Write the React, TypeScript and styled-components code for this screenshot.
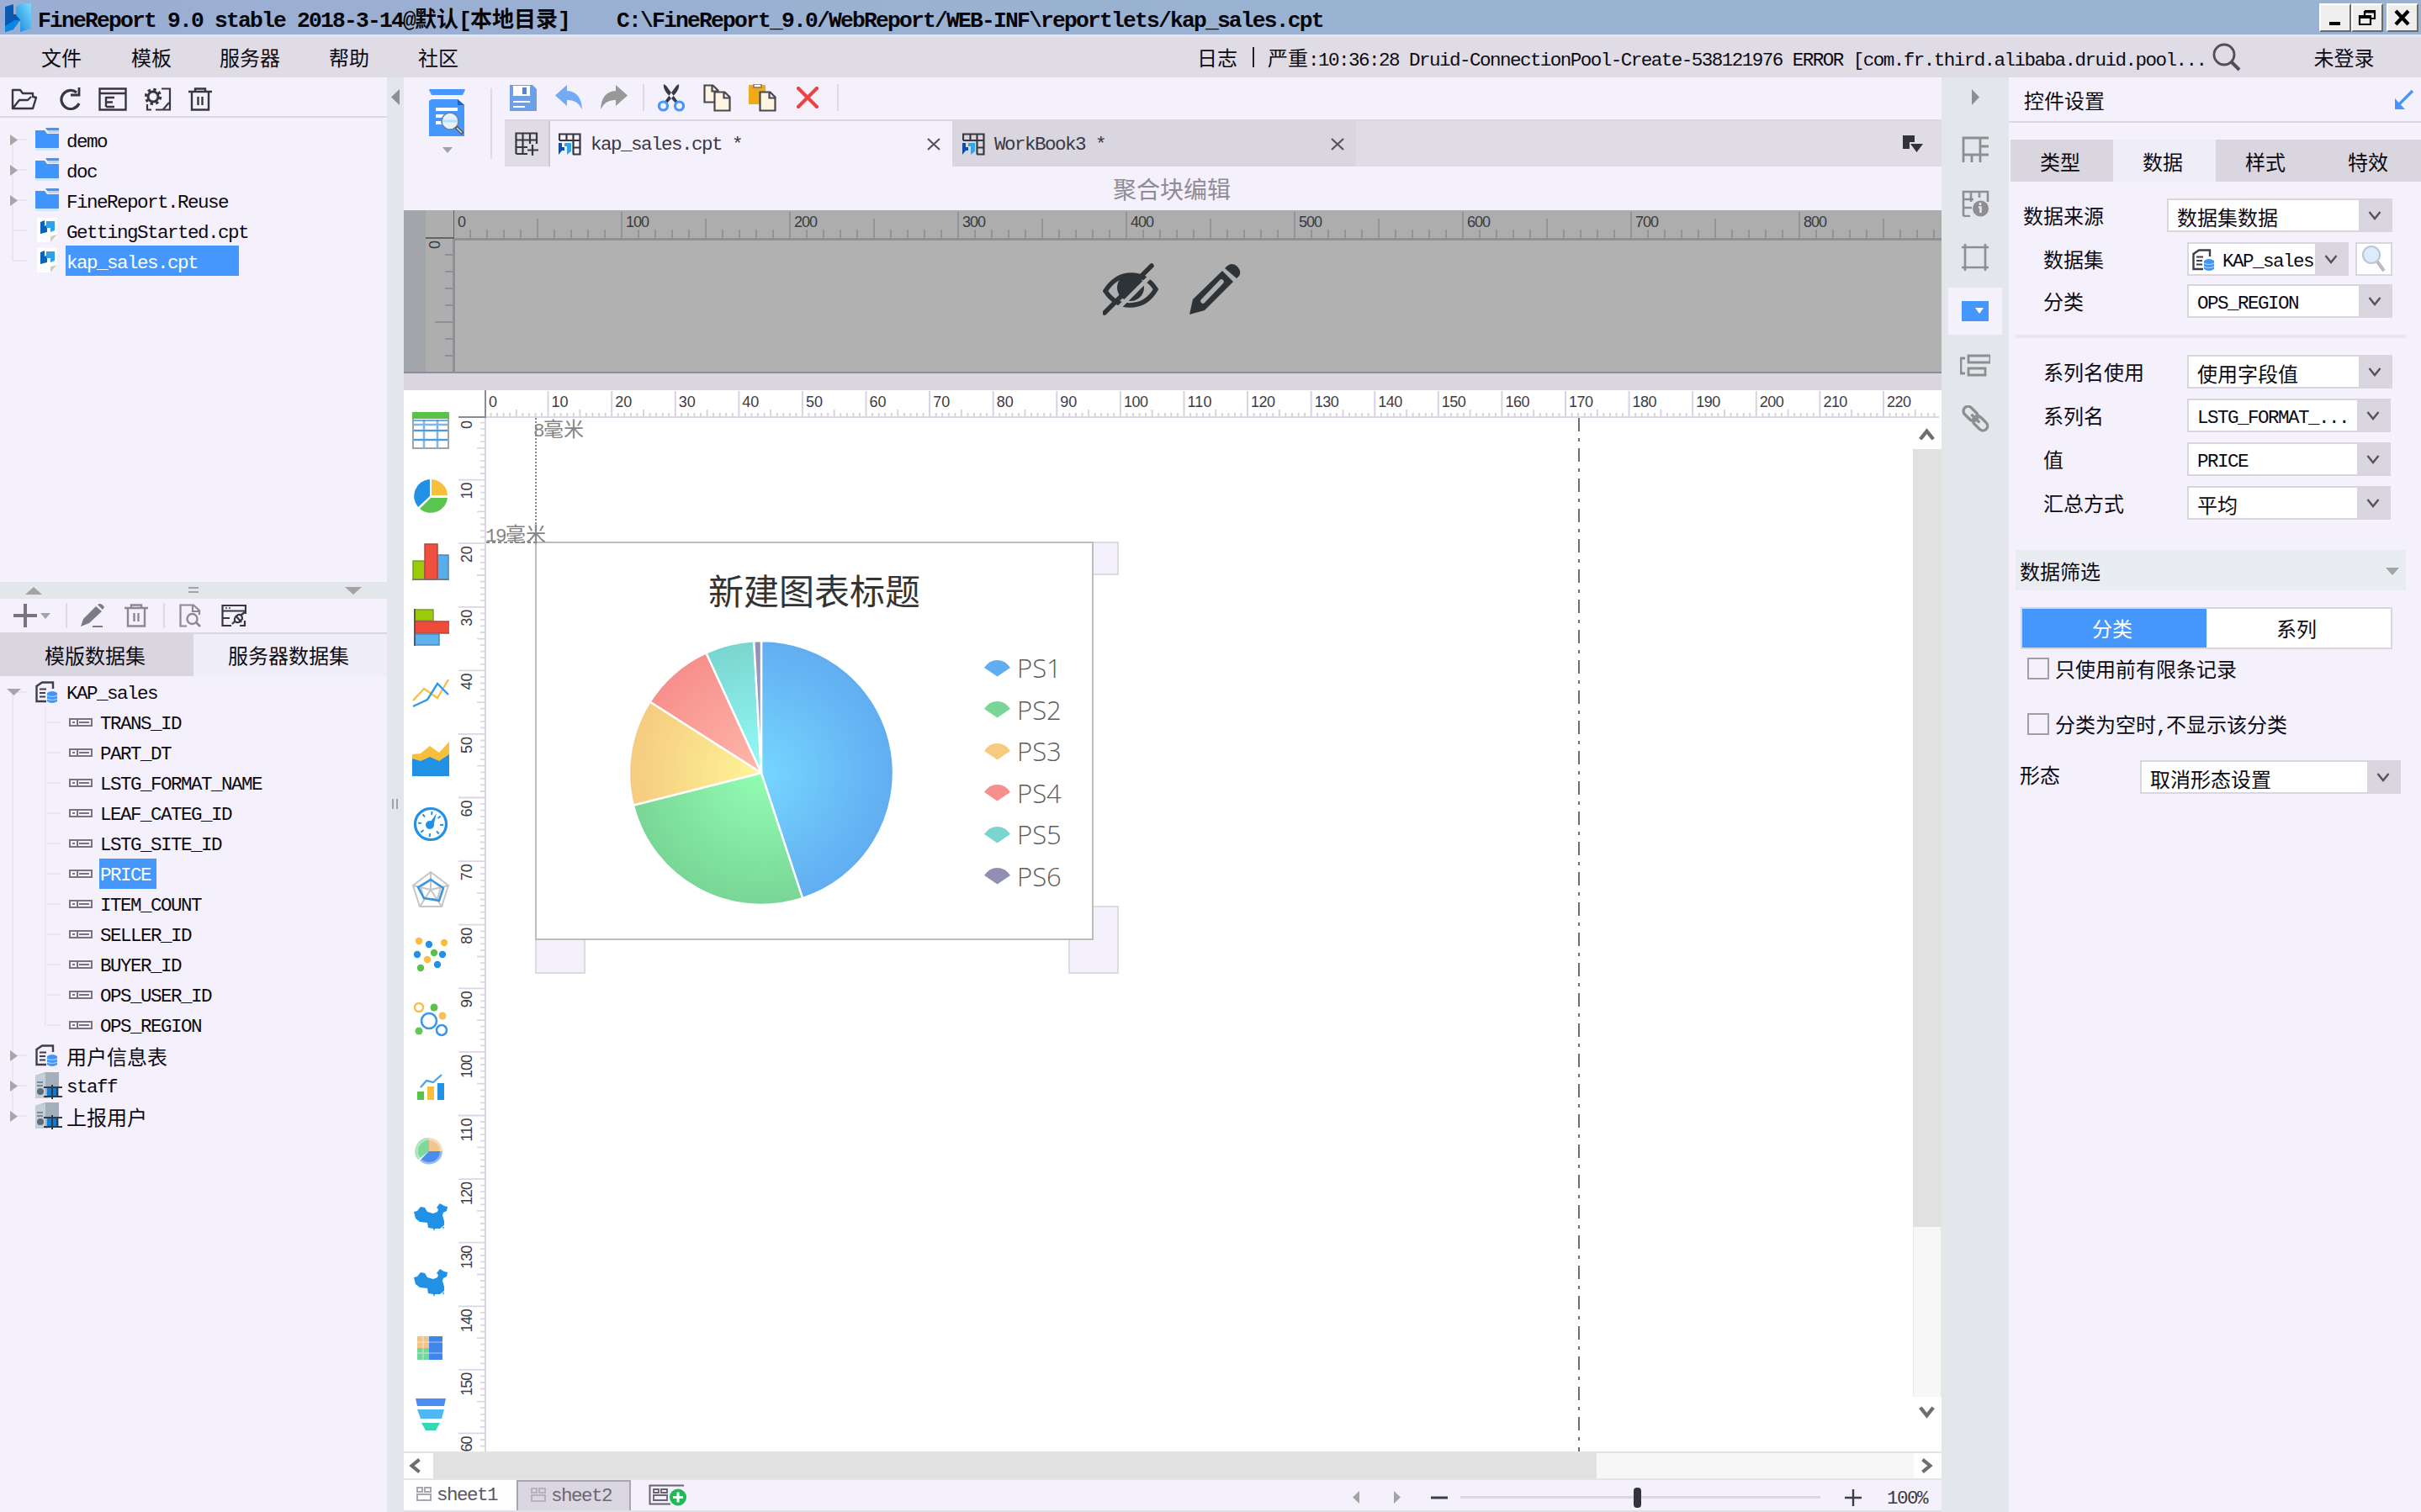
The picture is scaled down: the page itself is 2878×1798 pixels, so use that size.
import React from "react";
import styled, { createGlobalStyle, css } from "styled-components";

const Global = createGlobalStyle`
  *, *::before, *::after { box-sizing: border-box; }
  html, body { margin: 0; padding: 0; background: #f4f1fd; }
  body { overflow: hidden; }
  svg { display: block; flex: none; }
`;

const cjk = `"Noto Sans CJK SC", sans-serif`;
const mono = `"Liberation Mono", "Noto Sans CJK SC", monospace`;
const c = {
  bg: "#f4f1fd",
  bar: "#dfdce6",
  tab: "#d9d6e0",
  split: "#e3e7eb",
  blue: "#4597fd",
  ink: "#0c0a12",
  icon: "#38363f",
};

/* ---------- text ---------- */

const Line = styled.span<{ $h: number; $lh: number; $color: string; $bold?: boolean }>`
  display: block;
  flex: none;
  white-space: pre;
  height: ${(p) => p.$h}px;
  line-height: ${(p) => p.$lh}px;
  color: ${(p) => p.$color};
  font-family: ${mono};
  font-weight: ${(p) => (p.$bold ? 700 : 400)};
  font-size: 0;
`;
const Wide = styled.span<{ $size: number }>`
  font-family: ${cjk};
  font-size: ${(p) => p.$size}px;
`;
const Narrow = styled.span<{ $u: number; $size: number }>`
  font-family: ${mono};
  font-size: ${(p) => p.$size}px;
  letter-spacing: ${(p) => p.$u - p.$size * 0.6}px;
`;

type TextProps = { children: string; u?: number; wide?: number; h?: number; color?: string; bold?: boolean };
function Text({ children, u = 12, wide, h = 30, color = c.ink, bold }: TextProps) {
  const runs = children.match(/[\x00-\xff]+|[^\x00-\xff]+/g) || [];
  const latin = runs.length === 1 && runs[0].charCodeAt(0) < 256;
  return (
    <Line $h={h} $lh={latin ? h + 3 : h} $color={color} $bold={bold}>
      {runs.map((r, i) =>
        r.charCodeAt(0) < 256 ? (
          <Narrow key={i} $u={u} $size={u * 1.88}>{r}</Narrow>
        ) : (
          <Wide key={i} $size={wide ?? u * 2}>{r}</Wide>
        )
      )}
    </Line>
  );
}

/* ---------- frame ---------- */

const Screen = styled.div`
  width: 2878px;
  height: 1798px;
  display: flex;
  flex-direction: column;
  overflow: hidden;
  background: ${c.bg};
`;
const TitleBar = styled.header`
  height: 44px;
  flex: none;
  display: flex;
  align-items: center;
  background: linear-gradient(90deg, #9aaed3, #9ab3d2 55%, #9ab3d2);
  border-bottom: 3px solid #e3e6f0;
  padding: 0 3px 0 5px;
  gap: 8px;
`;
const WindowButtons = styled.div`
  margin-left: auto;
  display: flex;
`;
const WinButton = styled.div<{ $gap?: number }>`
  width: 38px;
  height: 34px;
  margin-left: ${(p) => p.$gap || 0}px;
  background: #eeeeec;
  border: 2px solid;
  border-color: #fff #6b6b6b #6b6b6b #fff;
  display: flex;
  align-items: center;
  justify-content: center;
`;
const MenuBar = styled.nav`
  height: 48px;
  flex: none;
  display: flex;
  align-items: center;
  background: ${c.bar};
`;
const Gap = styled.div<{ $w: number }>`
  width: ${(p) => p.$w}px;
  flex: none;
`;
const Divider = styled.div<{ $h: number; $color?: string }>`
  width: 2px;
  height: ${(p) => p.$h}px;
  background: ${(p) => p.$color || "#dddae6"};
  flex: none;
`;
const Body = styled.div`
  flex: 1;
  display: flex;
  min-height: 0;
`;

/* ---------- left side ---------- */

const Side = styled.aside`
  width: 460px;
  flex: none;
  display: flex;
  flex-direction: column;
`;
const FileTools = styled.div`
  height: 48px;
  flex: none;
  display: flex;
  align-items: center;
  border-bottom: 2px solid ${c.tab};
  padding: 6px 0 0 13px;
`;
const FileTree = styled.div`
  height: 552px;
  flex: none;
  padding-top: 8px;
`;
const HSplit = styled.div`
  height: 20px;
  flex: none;
  background: ${c.split};
  display: flex;
  align-items: center;
  justify-content: space-between;
  padding: 0 30px;
`;
const DataTools = styled.div`
  height: 42px;
  flex: none;
  display: flex;
  align-items: center;
  border-bottom: 2px solid ${c.tab};
  padding-left: 16px;
`;
const DataTabs = styled.div`
  height: 50px;
  flex: none;
  display: flex;
`;
const DataTab = styled.div<{ $on?: boolean }>`
  flex: 1;
  display: flex;
  align-items: center;
  justify-content: center;
  padding-right: 4px;
  background: ${(p) => (p.$on ? c.tab : "#efedf7")};
`;
const DataTree = styled.div`
  padding-top: 1px;
`;
const TreeRow = styled.div`
  height: 36px;
  display: flex;
  align-items: center;
`;
const TreeIcon = styled.div<{ $w: number }>`
  width: ${(p) => p.$w}px;
  flex: none;
  display: flex;
  align-items: center;
`;
const TreeLabel = styled.div<{ $sel?: boolean; $w?: number; $top?: number }>`
  height: 36px;
  padding: ${(p) => p.$top ?? 4}px 0 0 1px;
  ${(p) => p.$sel && css`background: ${c.blue};`}
  ${(p) => p.$w && css`width: ${p.$w}px;`}
`;
const VSplit = styled.div`
  width: 20px;
  flex: none;
  background: ${c.split};
  display: flex;
  flex-direction: column;
  align-items: center;
  padding-top: 14px;
  gap: 825px;
`;

/* ---------- centre ---------- */

const Center = styled.main`
  width: 1828px;
  flex: none;
  display: flex;
  flex-direction: column;
`;
const TopTools = styled.div`
  height: 106px;
  flex: none;
  display: flex;
`;
const Preview = styled.div`
  width: 120px;
  display: flex;
  padding: 13px 0 0 30px;
`;
const PreviewIcon = styled.div`
  width: 73px;
  display: flex;
  flex-direction: column;
  gap: 13px;
`;
const TopRight = styled.div`
  flex: 1;
  display: flex;
  flex-direction: column;
`;
const EditTools = styled.div`
  height: 50px;
  flex: none;
  display: flex;
  align-items: center;
  padding: 0 0 2px 6px;
`;
const BookTabs = styled.div`
  height: 56px;
  display: flex;
  background: ${c.bar};
  border-top: 2px solid ${c.tab};
`;
const NewBook = styled.div`
  width: 54px;
  display: flex;
  align-items: center;
  padding-left: 12px;
  border-right: 2px solid #cbc8d2;
`;
const BookTab = styled.div<{ $on?: boolean; $w: number }>`
  width: ${(p) => p.$w}px;
  display: flex;
  align-items: center;
  padding: 0 14px 0 ${(p) => (p.$on ? 10 : 12)}px;
  gap: 11px;
  background: ${(p) => (p.$on ? c.bg : c.tab)};
`;
const Push = styled.div`
  margin-left: auto;
`;
const TabMenuSlot = styled.div`
  width: 46px;
  margin-left: auto;
  display: flex;
  align-items: center;
`;
const BlockTitle = styled.div`
  height: 52px;
  flex: none;
  display: flex;
  justify-content: center;
  align-items: center;
  padding-right: 2px;
`;
const BlockArea = styled.section`
  height: 194px;
  flex: none;
  display: flex;
  background: #b1b1b1;
  border-bottom: 2px solid #8f8f98;
`;
const BlockGutter = styled.div`
  width: 60px;
  background: linear-gradient(90deg, #a2a6ab 0 26px, #aeaeae 26px);
`;
const BlockMain = styled.div`
  flex: 1;
  display: flex;
  flex-direction: column;
`;
const BlockActions = styled.div`
  display: flex;
  padding: 26px 0 0 771px;
  gap: 36px;
`;
const Band = styled.div`
  height: 20px;
  flex: none;
  background: ${c.tab};
`;
const Design = styled.section`
  height: 1262px;
  flex: none;
  display: flex;
  background: #fff;
`;
const Palette = styled.div`
  width: 65px;
  flex: none;
  display: flex;
  flex-direction: column;
  align-items: flex-start;
  padding: 9px 0 0 10px;
`;
const PaletteItem = styled.div`
  height: 77.95px;
  flex: none;
  display: flex;
  align-items: center;
`;
const Sheet = styled.div`
  flex: 1;
  display: flex;
  flex-direction: column;
  min-width: 0;
`;
const SheetBody = styled.div`
  height: 1229px;
  display: flex;
`;
const Canvas = styled.div`
  position: relative;
  width: 1696px;
  flex: none;
`;
const Handle = styled.div<{ $x: number; $y: number; $w: number; $h: number }>`
  position: absolute;
  left: ${(p) => p.$x}px;
  top: ${(p) => p.$y}px;
  width: ${(p) => p.$w}px;
  height: ${(p) => p.$h}px;
  background: ${c.bg};
  border: 2px solid #dddae4;
`;
const Pin = styled.div<{ $x: number; $y: number }>`
  position: absolute;
  left: ${(p) => p.$x}px;
  top: ${(p) => p.$y}px;
`;
const Chart = styled.div`
  position: absolute;
  left: 58px;
  top: 147px;
  width: 664px;
  height: 474px;
  background: #fff;
  border: 2px solid #bcbcbc;
  display: flex;
  flex-direction: column;
`;
const ChartTitle = styled.div`
  margin-top: 25px;
  height: 60px;
  line-height: 60px;
  text-align: center;
  font-family: ${cjk};
  font-size: 42px;
  color: #333;
`;
const ChartBody = styled.div`
  display: flex;
  margin-top: 30px;
  padding-left: 109px;
`;
const Legend = styled.div`
  margin: 9px 0 0 107px;
`;
const LegendRow = styled.div`
  height: 49.5px;
  display: flex;
  align-items: center;
  gap: 8px;
  font-family: "Open Sans", sans-serif;
  font-weight: 300;
  font-size: 31px;
  line-height: 49px;
  color: #5c5c5c;
`;
const VScroll = styled.div`
  width: 34px;
  display: flex;
  flex-direction: column;
  padding-top: 3px;
`;
const HScroll = styled.div`
  height: 34px;
  flex: none;
  display: flex;
  border-top: 2px solid #e6e3e0;
  border-bottom: 2px solid #e9e3e0;
`;
const ScrollButton = styled.div<{ $w: number; $h?: number; $shift?: number }>`
  width: ${(p) => p.$w}px;
  ${(p) => p.$h && css`height: ${p.$h}px;`}
  display: flex;
  align-items: center;
  justify-content: center;
  padding-right: ${(p) => p.$shift ?? 2}px;
  background: #fefefe;
`;
const Thumb = styled.div<{ $len: number; $v?: boolean }>`
  background: #e1e1e1;
  ${(p) => (p.$v ? css`height: ${p.$len}px;` : css`width: ${p.$len}px;`)}
`;
const Track = styled.div<{ $len: number; $v?: boolean }>`
  background: #f7f7f7;
  ${(p) => (p.$v ? css`height: ${p.$len}px; border: 0 solid #ebe7e3; border-width: 0 1px;` : css`width: ${p.$len}px;`)}
`;
const Status = styled.footer`
  height: 38px;
  flex: none;
  display: flex;
  align-items: center;
  border-bottom: 2px solid #e0dfe6;
`;
const SheetTab = styled.div<{ $on?: boolean }>`
  width: ${(p) => (p.$on ? 134 : 136)}px;
  height: 36px;
  display: flex;
  align-items: center;
  padding: 0 0 3px 15px;
  gap: 6px;
  background: ${(p) => (p.$on ? "#fefdff" : "#dad7e2")};
  ${(p) => !p.$on && css`border: 2px solid #a9a6b2; border-bottom: 0;`}
`;
const Zoom = styled.div`
  margin-left: 791px;
  padding-top: 5px;
  display: flex;
  align-items: center;
`;
const Slider = styled.div`
  width: 428px;
  height: 24px;
  display: flex;
  align-items: center;
  background: linear-gradient(#dad7e4, #dad7e4) center / 100% 3px no-repeat;
`;
const Knob = styled.div`
  width: 9px;
  height: 24px;
  margin-left: 206px;
  border-radius: 4px;
  background: #35343d;
`;

/* ---------- right side ---------- */

const Strip = styled.div`
  width: 80px;
  flex: none;
  background: ${c.split};
  display: flex;
  flex-direction: column;
  align-items: center;
  padding-top: 14px;
`;
const StripItem = styled.div<{ $on?: boolean; $first?: boolean }>`
  width: 64px;
  height: 56px;
  margin-top: ${(p) => (p.$first ? 25 : 8)}px;
  flex: none;
  display: flex;
  align-items: center;
  justify-content: center;
  ${(p) => p.$on && css`background: ${c.bg};`}
`;
const Props = styled.aside`
  flex: 1;
  display: flex;
  flex-direction: column;
`;
const PropsTitle = styled.div`
  height: 54px;
  flex: none;
  display: flex;
  align-items: center;
  justify-content: space-between;
  padding: 1px 8px 0 18px;
  border-bottom: 2px solid ${c.tab};
`;
const PropsTabs = styled.div`
  height: 50px;
  flex: none;
  margin: 20px 0 0 2px;
  display: flex;
`;
const PropsTab = styled.div<{ $on?: boolean }>`
  flex: 1;
  display: flex;
  align-items: center;
  justify-content: center;
  padding: 1px 4px 0 0;
  background: ${(p) => (p.$on ? "#efedf7" : c.tab)};
`;
const Field = styled.div<{ $top: number; $indent: number; $end?: number }>`
  height: 40px;
  flex: none;
  display: flex;
  align-items: center;
  justify-content: space-between;
  margin-top: ${(p) => p.$top}px;
  padding: 0 ${(p) => p.$end ?? 34}px 0 ${(p) => p.$indent}px;
`;
const Raised = styled.div`
  height: 36px;
`;
const SelectBox = styled.div<{ $w: number }>`
  width: ${(p) => p.$w}px;
  height: 40px;
  display: flex;
  border: 2px solid ${c.tab};
  background: #fff;
`;
const SelectValue = styled.div<{ $pad: number }>`
  flex: 1;
  min-width: 0;
  display: flex;
  align-items: center;
  gap: 8px;
  padding: 3px 0 0 ${(p) => p.$pad}px;
`;
const SelectButton = styled.div`
  width: 38px;
  flex: none;
  display: flex;
  align-items: center;
  justify-content: center;
  background: ${c.tab};
`;
const FieldPair = styled.div`
  display: flex;
  gap: 8px;
`;
const SearchBox = styled.div`
  width: 44px;
  height: 40px;
  border: 2px solid ${c.tab};
  background: #fff;
  display: flex;
  align-items: center;
  justify-content: center;
`;
const Rule = styled.div`
  height: 4px;
  flex: none;
  margin: 20px 18px 0 8px;
  background: #e7e6ea;
`;
const Section = styled.div`
  height: 48px;
  flex: none;
  margin: 36px 18px 0 8px;
  padding: 2px 8px 0 5px;
  display: flex;
  align-items: center;
  justify-content: space-between;
  background: #e9ecf1;
`;
const Segments = styled.div`
  height: 50px;
  flex: none;
  margin: 20px 34px 0 14px;
  display: flex;
  border: 2px solid ${c.tab};
`;
const Segment = styled.div<{ $on?: boolean }>`
  flex: 1;
  display: flex;
  align-items: center;
  justify-content: center;
  padding-right: 5px;
  background: ${(p) => (p.$on ? c.blue : "#fff")};
`;
const Check = styled.div<{ $top: number }>`
  height: 26px;
  flex: none;
  margin: ${(p) => p.$top}px 0 0 22px;
  display: flex;
  align-items: center;
  gap: 7px;
`;
const CheckMark = styled.div`
  width: 26px;
  height: 26px;
  border: 2px solid #a19ea9;
`;

/* ---------- icons ---------- */

type IcoProps = { w: number; h: number; children: React.ReactNode; vb?: string };
const Ico = ({ w, h, children, vb }: IcoProps) => (
  <svg width={w} height={h} viewBox={vb || `0 0 ${w} ${h}`} fill="none">{children}</svg>
);

const Tri = ({ dir, w, h, color = "#a3a3a6" }: { dir: "l" | "r" | "u" | "d"; w: number; h: number; color?: string }) => {
  const pts = { l: `${w},0 0,${h / 2} ${w},${h}`, r: `0,0 ${w},${h / 2} 0,${h}`, u: `0,${h} ${w / 2},0 ${w},${h}`, d: `0,0 ${w},0 ${w / 2},${h}` }[dir];
  return <Ico w={w} h={h}><polygon points={pts} fill={color} /></Ico>;
};

const Logo = () => (
  <Ico w={32} h={34}>
    <defs>
      <linearGradient id="lg" x1="0" y1="0" x2="1" y2="1"><stop offset="0" stopColor="#0b5fb5" /><stop offset="1" stopColor="#0a4fa8" /></linearGradient>
      <linearGradient id="lg2" x1="1" y1="0" x2="0" y2="1"><stop offset="0" stopColor="#7fdcfb" /><stop offset="1" stopColor="#1485e0" /></linearGradient>
    </defs>
    <path d="M1 4 L11 1 V13 H19 V21 H11 V31 L1 34 Z" fill="url(#lg)" />
    <path d="M14 4 L20 0 H32 V30 L19 34 V20 L14 14 Z" fill="url(#lg2)" />
    <path d="M1 27 L12 20 H19 L11 31 L1 34Z" fill="#0d86e2" />
  </Ico>
);
const FolderOpen = () => (
  <Ico w={32} h={26}><path d="M2 24 V2 H11 L14 6 H26 V10 L30 11 L26 24 H2 L10 14 H20 L24 10" stroke={c.icon} strokeWidth="2.4" strokeLinejoin="round" /></Ico>
);
const Refresh = () => (
  <Ico w={28} h={28}><path d="M21 6 A11 11 0 1 0 24 19" stroke={c.icon} strokeWidth="3.2" /><path d="M24 0 V9 H14" stroke={c.icon} strokeWidth="2.8" /></Ico>
);
const TemplateWin = () => (
  <Ico w={34} h={28}><path d="M1.5 1.5 H32.5 V26.5 H1.5 Z M1.5 7 H32.5 M9 11 V23 M9 12 H19 M9 17.5 H17 M9 23 H19" stroke={c.icon} strokeWidth="2.4" /></Ico>
);
const GearDoc = () => (
  <Ico w={32} h={28}>
    <path d="M20 1.5 H30 V18 M3 20 V26.5 H8 M13 26.500 H30 V18" stroke={c.icon} strokeWidth="2.2" />
    <circle cx="10" cy="11" r="6" stroke={c.icon} strokeWidth="3" />
    <circle cx="10" cy="11" r="8.5" stroke={c.icon} strokeWidth="3.4" strokeDasharray="3.34 3.34" />
    <path d="M29 18 L22 26" stroke={c.icon} strokeWidth="2" />
  </Ico>
);
const Trash = ({ color = c.icon }: { color?: string }) => (
  <Ico w={28} h={28}><path d="M0 5 H28 M8 5 V1.5 H20 V5 M4 6 V26.5 H24 V6 M11.500 11 V21 M16.500 11 V21" stroke={color} strokeWidth="2.4" /></Ico>
);
const Folder = () => (
  <Ico w={30} h={28}><rect y="23" width="28" height="4" fill="#cfe6ff" /><path d="M0 3 H11 L14 7 H28 V24 H0 Z" fill="#3f95fc" /><path d="M12 0 H28 V3 H14 Z" fill="#5f8ed0" /><path d="M14 3 H28 V6 H16Z" fill="#b9d8fb" /></Ico>
);
const CptFile = () => (
  <Ico w={30} h={30}><path d="M2 0 H26 V22 L19 29 H2 Z" fill="#fff" /><path d="M26 20 L18 29 V22 Z" fill="#cfccc9" /><path d="M6 5 L11 3 V10 L14 8 V17 L6 19 Z" fill="#0c62b8" /><path d="M13 4 H23 V15 L18 17 V12 H13 Z" fill="#2aa3ec" /></Ico>
);
const Dataset = () => (
  <Ico w={28} h={27}>
    <path d="M13 24 H1.5 V6 L8 1.5 H21 V9" stroke="#3f3d49" strokeWidth="2.4" />
    <path d="M5 9.500 H13 M5 14 H12 M5 18.500 H12" stroke="#3f3d49" strokeWidth="2.2" />
    <path d="M14 14 Q20 10 26 14 V24 Q20 28 14 24 Z" fill="#3f95fc" /><path d="M14 17 Q20 20 26 17 M14 21 Q20 24 26 21" stroke="#a8d0ff" strokeWidth="1.2" />
  </Ico>
);
const FieldIcon = () => (
  <Ico w={28} h={10}><rect x="1" y="1" width="26" height="8" stroke="#77747f" strokeWidth="2" /><path d="M10 1 V9 M12 5 H24 M4 5 H7" stroke="#77747f" strokeWidth="2" /></Ico>
);
const Server = () => (
  <Ico w={32} h={32}>
    <path d="M0 4 L12 0 H28 V28 L12 31 H0 Z" fill="#a3b0bc" /><path d="M0 4 L12 1 V31 H0 Z" fill="#c3ced8" />
    <path d="M2 12 H9 M2 16 H9" stroke="#66727e" strokeWidth="1.5" /><circle cx="6" cy="23" r="4" fill="#5f6d7a" />
    <rect x="14" y="18" width="13" height="11" fill="#1979cf" /><path d="M10 18 H32 M10 29 H32 M20 15 V32 M26 18 V29" stroke="#2f3b46" strokeWidth="2" />
  </Ico>
);
const Pencil = ({ color = "#7c7a84" }: { color?: string }) => (
  <Ico w={28} h={28}><path d="M0 27 L3 18 L18 3 L25 9 L10 23 Z M20 1 Q24 -2 28 4 L26 7 Z" fill={color} /><path d="M14 27 H26" stroke={color} strokeWidth="2" /></Ico>
);
const DocSearch = () => (
  <Ico w={26} h={28}><path d="M24 13 V8 L17 1.5 H1.5 V26.5 H9 M16 1.5 V9 H24" stroke="#8b8893" strokeWidth="2.2" /><circle cx="15.5" cy="18" r="6" stroke="#8b8893" strokeWidth="2.4" /><path d="M20 22 L25 27" stroke="#8b8893" strokeWidth="2.6" /></Ico>
);
const ConnWin = () => (
  <Ico w={30} h={28}><path d="M29 12 V2 H1.500 V26 H12 M1.500 8.500 H29 M1.500 17 H10 M28 20 V26 H22" stroke={c.icon} strokeWidth="2.2" /><path d="M5 5 H7 M9 5 H11" stroke={c.icon} strokeWidth="1.6" /><path d="M13 24 L17 20 M24 13 L28 10 M16 17 L20 13 Q25 12 25 18 L21 22 Q15 23 16 17 M17 14 L24 22" stroke={c.icon} strokeWidth="2.2" /></Ico>
);
const PreviewDoc = () => (
  <Ico w={43} h={57}>
    <path d="M0 2 Q0 1 2 1 H41 Q43 1 43 2 L40 8 H3 Z" fill={c.blue} />
    <path d="M3 13 H34 L42 20 V57 H0 V15 Z" fill={c.blue} /><path d="M34 13 V20 H42 Z" fill="#1d63b8" />
    <path d="M8 25 H34 M8 33 H18 M8 41 H16" stroke="#fff" strokeWidth="4" />
    <circle cx="25" cy="39" r="10" fill="#e4f2ff" stroke="#67839c" strokeWidth="1.5" /><path d="M16 39 H34" stroke="#bcdcfb" strokeWidth="3" />
    <path d="M32 46 L40 54" stroke="#555" strokeWidth="4" /><path d="M33 47 L39 53" stroke="#ddd" strokeWidth="1.5" />
  </Ico>
);
const Save = () => (
  <Ico w={32} h={32}><path d="M0 1 H27 L32 6 V32 H0 Z" fill="#6c9fe6" /><rect x="4" y="2" width="20" height="12" fill="#fff" /><rect x="15" y="4" width="5" height="8" fill="#4f86d8" /><path d="M4 21 H24 M4 27 H18" stroke="#fff" strokeWidth="2.2" /></Ico>
);
const Undo = ({ color, flip }: { color: string; flip?: boolean }) => (
  <Ico w={33} h={30}><g transform={flip ? "translate(33 0) scale(-1 1)" : undefined}><path d="M14 0 V7 Q31 8 32 29 Q26 17 14 18 V25 L0 12.5 Z" fill={color} /></g></Ico>
);
const Cut = () => (
  <Ico w={32} h={33}><path d="M7 0 Q6 4 10 10 L22 24 L24 21 L10 2 Z M25 0 Q26 4 22 10 L10 24 L8 21 L22 2 Z" fill="#3a3a42" /><circle cx="6.5" cy="26" r="5" stroke={c.blue} strokeWidth="3.2" /><circle cx="25.5" cy="26" r="5" stroke={c.blue} strokeWidth="3.2" /></Ico>
);
const page = (x: number, y: number, w: number, h: number) => (
  <path d={`M${x} ${y} H${x + w - 6} L${x + w} ${y + 6} V${y + h} H${x} Z M${x + w - 7} ${y} V${y + 7} H${x + w}`} fill="#fdf5df" stroke="#48464f" strokeWidth="2.2" />
);
const Copy = () => <Ico w={33} h={33}>{page(1.5, 1.5, 16, 20)}{page(13.5, 9.5, 18, 22)}</Ico>;
const Paste = () => <Ico w={33} h={33}><path d="M0 1 H20 V24 H0 Z" fill="#efab17" /><path d="M6 0 H15 V4 H6 Z" fill="#fff" stroke="#8a6d57" strokeWidth="1.5" />{page(13.5, 9.5, 18, 22)}</Ico>;
const RedX = () => <Ico w={26} h={26}><path d="M2 2 L24 24 M24 2 L2 24" stroke="#ea4340" strokeWidth="4.2" strokeLinecap="round" /></Ico>;
const GridPlus = () => (
  <Ico w={29} h={29}><path d="M1.5 26 V1.5 H26 V14 M1.5 9.5 H26 M1.5 18 H15 M9.5 1.5 V26 M18 1.5 V14 M1.5 26 H15 M21 15 V28 M15 21.5 H28" stroke={c.icon} strokeWidth="2.2" /></Ico>
);
const BookIcon = () => (
  <Ico w={27} h={27}><path d="M1 9 V1.5 H25.5 V25.5 H17 M1 9 H25.5 M9.5 1.5 V9 M17.5 1.5 V25.5 M17.5 17.5 H25.5" stroke={c.icon} strokeWidth="2.2" /><path d="M0 12 H4 V17 H7 V21 H4 L0 26Z" fill="#0f4fa3" /><path d="M7 12 H15 V22 L10 26 V16 H7 Z" fill="#35a4e8" /></Ico>
);
const Close = () => <Ico w={16} h={15}><path d="M1 1 L15 14 M15 1 L1 14" stroke="#55525d" strokeWidth="2.2" /></Ico>;
const TabMenu = () => <Ico w={24} h={20}><path d="M0 0 H14 V8 H8 V16 H0 Z M9 10 H24 L16.5 20 Z" fill="#33323b" /></Ico>;
const EyeOff = () => (
  <Ico w={66} h={64}>
    <path d="M3 34 Q15 15 34 15 Q52 15 63 32 Q52 51 32 51 Q14 51 3 34 Z" stroke="#2e3338" strokeWidth="5.5" />
    <circle cx="33" cy="30" r="16" fill="#2e3338" />
    <path d="M7 66 L66 7" stroke="#b1b1b1" strokeWidth="5" />
    <path d="M2 60 L58 4" stroke="#2e3338" strokeWidth="5.5" strokeLinecap="round" />
  </Ico>
);
const EditBig = () => (
  <Ico w={64} h={64}>
    <path d="M1 62 L5 44 L40 10 L53 23 L19 57 Z" fill="#2e3338" /><path d="M43 7 Q51 -2 58 5 Q65 13 57 19 Z" fill="#2e3338" />
    <path d="M17 46 L39 23" stroke="#b1b1b1" strokeWidth="5.5" strokeLinecap="round" />
  </Ico>
);
const Search = () => <Ico w={34} h={34}><circle cx="14" cy="14" r="12" stroke="#514e5a" strokeWidth="2.8" /><path d="M22.5 22.5 L32 32" stroke="#514e5a" strokeWidth="4" /></Ico>;
const Chevron = ({ dir = "d", color = "#55525d", s = 16, sw = 2.4 }: { dir?: "d" | "u" | "l" | "r"; color?: string; s?: number; sw?: number }) => {
  const rot = { d: 0, u: 180, l: 90, r: 270 }[dir];
  return <Ico w={s} h={s} vb="0 0 16 16"><path d="M1.5 4 L8 12 L14.5 4" stroke={color} strokeWidth={sw} transform={`rotate(${rot} 8 8)`} /></Ico>;
};
const Glass = () => <Ico w={30} h={34}><circle cx="12" cy="12" r="10" fill="#dcecfb" stroke="#b9c8da" strokeWidth="2.2" /><path d="M19 20 L27 31" stroke="#bdb9c4" strokeWidth="4" /></Ico>;
const SheetIcon = ({ color }: { color: string }) => <Ico w={18} h={18}><path d="M1 1 H7 V6 H1 Z M10 1 H17 V6 H10 Z M1 9 H17 V16 H1 Z" stroke={color} strokeWidth="2" /></Ico>;
const AddSheet = () => (
  <Ico w={46} h={26}><path d="M42 1.5 H1.5 V23.5 H26" stroke="#66636e" strokeWidth="2" /><path d="M6 6 H12 V10 H6 Z M15 6 H22 V10 H15 Z M6 13 H22 V19 H6 Z" stroke="#66636e" strokeWidth="1.8" /><circle cx="35" cy="15.5" r="10" fill="#1fb955" /><path d="M29 15.5 H41 M35 9.5 V21.5" stroke="#fff" strokeWidth="3" /></Ico>
);

/* palette drawings, each on a 44 x 44 field */
const china = "M2 16 L6 15 L10 10 L15 11 L18 16 L25 18 L30 16 L31 13 L29 11 L33 6 L38 9 L42 10 L41 15 L37 17 L36 20 L38 27 L38 32 L33 36 L27 36 L26 39 L25 36 L19 35 L18 29 L9 28 L4 24 Z M36 34 L38 34 L37 37Z";
const dots: [number, number, string][] = [
  [8, 6, "#f8bf3c"], [38, 8, "#f8bf3c"], [18, 28, "#f8bf3c"], [20, 10, "#2191e6"], [6, 22, "#2191e6"],
  [36, 22, "#2191e6"], [30, 34, "#2191e6"], [26, 20, "#58c24b"], [10, 38, "#58c24b"],
];
const paletteIcons: React.ReactNode[] = [
  <><rect x="1" y="1" width="42" height="42" fill="#fff" stroke="#a3a3a3" strokeWidth="2" /><path d="M2 15 H42 M2 22 H42 M2 33 H42 M14 9 V43 M30 9 V43" stroke="#7fb6e6" strokeWidth="2.5" /><path d="M2 10 H42 M2 22 H42 M2 33 H42" stroke="#3b93dd" strokeWidth="1.5" /><rect width="44" height="8" fill="#58c24b" /></>,
  <><path d="M21 22 V2 A20 20 0 0 0 7 35 Z" fill="#2191e6" /><path d="M23 21 V2 A20 20 0 0 1 42 21 Z" fill="#f8bf3c" /><path d="M22 24 H42 A20 19 0 0 1 9 37 Z" fill="#5ac551" /></>,
  <><rect x="1" y="21" width="14" height="22" fill="#9ccb0b" stroke="#7c9a3a" strokeWidth="1.5" /><rect x="30" y="14" width="13" height="29" fill="#58aeea" stroke="#4889bb" strokeWidth="1.5" /><rect x="15" y="1" width="15" height="42" fill="#f0503f" stroke="#a84b45" strokeWidth="1.5" /><path d="M0 43.2 H44" stroke="#777" strokeWidth="1.6" /></>,
  <><rect x="3" y="1" width="22" height="13" fill="#9ccb0b" stroke="#7c9a3a" strokeWidth="1.5" /><rect x="3" y="15" width="42" height="14" fill="#ee4b3a" stroke="#a84b45" strokeWidth="1.5" /><rect x="3" y="30" width="29" height="13" fill="#5db2ee" stroke="#4889bb" strokeWidth="1.5" /><path d="M3 0 V44" stroke="#555" strokeWidth="1.8" /></>,
  <><path d="M1 31 L14 17 L30 28 L43 6" stroke="#f8bf4c" strokeWidth="2.4" /><path d="M1 38 L18 30 L30 11 L43 24" stroke="#3398e8" strokeWidth="2.4" /></>,
  <><path d="M0 17 L10 16 L21 7 L32 15 L44 2 V30 H0 Z" fill="#f8bf3c" /><path d="M0 22 L10 25 L21 20 L32 25 L44 17 V43 H0 Z" fill="#2191e6" /></>,
  <><circle cx="22" cy="22" r="18.5" stroke="#2191e6" strokeWidth="3.2" /><circle cx="22" cy="22" r="13" stroke="#2191e6" strokeWidth="4" strokeDasharray="2 8.21" /><circle cx="21" cy="23" r="5" fill="#2191e6" /><path d="M20 22 L29 9 L25 25Z" fill="#2191e6" /></>,
  <><path d="M22 1 L43 17 L35 42 H9 L1 17 Z M22 10 L34 19 L30 33 H14 L10 19 Z M22 1 V22 M43 17 L22 22 M1 17 L22 22 M9 42 L22 22 M35 42 L22 22" stroke="#c4c6ca" strokeWidth="2" /><path d="M7 19 L22 10 L37 20 L32 35 L14 32 Z" stroke="#3b96e0" strokeWidth="2.6" /></>,
  <>{dots.map(([x, y, fill], i) => <circle key={i} cx={x} cy={y} r="4.2" fill={fill} />)}</>,
  <><circle cx="8" cy="7" r="5" stroke="#f8bf4c" strokeWidth="2.4" /><circle cx="26" cy="7" r="4.5" fill="#58c24b" /><circle cx="36" cy="17" r="4.5" fill="#f8bf5c" /><circle cx="20" cy="23" r="9" stroke="#3b96e8" strokeWidth="2.6" /><circle cx="35" cy="34" r="6" stroke="#3b96e8" strokeWidth="2.6" /><circle cx="8" cy="35" r="4.5" fill="#63c657" /></>,
  <><rect x="6" y="29" width="8" height="10" fill="#58c24b" /><rect x="18" y="23" width="8" height="16" fill="#f8bf3c" /><rect x="30" y="19" width="8" height="20" fill="#2191e6" /><path d="M10 24 L17 16 L25 18 L35 9" stroke="#4ba1e0" strokeWidth="2.2" /></>,
  <><path d="M20 22 V6 A16 16 0 0 0 7 32 Z" fill="#7fd79c" /><path d="M20 22 V6 A16 16 0 0 1 36 22 Z" fill="#f2c78e" /><path d="M20 22 H36 A16 16 0 0 1 9 33 Z" fill="#4b8cec" /><circle cx="20" cy="22" r="14.5" stroke="#fff" strokeOpacity=".4" strokeWidth="3" /></>,
  <path d={china} fill="#2191e6" />,
  <path d={china} fill="#2191e6" />,
  <><rect x="6" y="8" width="14" height="14" fill="#f2c48a" /><rect x="6" y="22" width="14" height="14" fill="#72d79a" /><rect x="20" y="8" width="16" height="28" fill="#3f85ea" /><path d="M6 15 H20 M13 8 V36 M6 28 H36 M20 15 H36" stroke="#fff" strokeOpacity=".4" strokeWidth="1.5" /></>,
  <><path d="M4 4 H40 L38 13 H6 Z" fill="#4b8df2" /><path d="M6 17 H38 L35 28 H10 Z" fill="#4fb8f4" /><path d="M11 33 H33 L28 42 H16 Z" fill="#33d8b4" /></>,
];

/* side strip drawings */
const g = "#8e8e92";
const stripIcons: React.ReactNode[] = [
  <path d="M2 31 V2 H32 M22 2 V31 M2 22 H32 M22 12 H32 M12 22 V31" stroke={g} strokeWidth="2.8" />,
  <><path d="M2 31 V2 H31 V14 M2 11 H14 M2 21 H12 M11 2 V14 M21 2 V9 M2 31 H10" stroke={g} strokeWidth="2.6" /><circle cx="22.5" cy="22" r="9.5" fill={g} /><path d="M22 15 V18 M20 20.5 H22.5 V27" stroke={c.split} strokeWidth="2.6" /></>,
  <path d="M4 0 V32 M28 0 V32 M0 4 H32 M0 28 H32" stroke={g} strokeWidth="2.6" />,
  <><rect x="0" y="4" width="32" height="24" fill={c.blue} /><path d="M16 12 H26 L21 19 Z" fill="#fff" /></>,
  <path d="M8 5 H34 V13 H8 Z M8 20 H28 V28 H8 Z M4 8 H-1 V26 H4" stroke={g} strokeWidth="2.8" />,
  <g transform="rotate(45 16 16)" stroke={g} strokeWidth="3.4"><rect x="-2" y="10" width="20" height="11" rx="5.500" /><rect x="14" y="10" width="20" height="11" rx="5.500" /><path d="M9 15.500 H23" /></g>,
];

/* ---------- rulers ---------- */

const STEP = 75.59;
const face = { fontFamily: "Liberation Sans", fontSize: 18 };

function BlockRuler() {
  let d = "";
  for (let i = 1; i <= 88; i++) {
    const x = i * 20 - 1;
    d += `M${x} ${i % 10 === 0 ? 2 : i % 5 === 0 ? 10 : 23} V33 `;
  }
  return (
    <svg width="1768" height="36" viewBox="0 0 1768 36">
      <rect width="1768" height="36" fill="#adadad" />
      <path d={d} stroke="#8b929a" strokeWidth="1.8" />
      <path d="M0 34.5 H1768" stroke="#8d9196" strokeWidth="3" />
      {Array.from({ length: 9 }, (_, i) => (
        <text key={i} x={i * 200 + 4} y="20" {...face} textLength={i ? 28 : undefined} fill="#393b40">{i * 100}</text>
      ))}
    </svg>
  );
}
function BlockSideRuler() {
  const ys = [53, 73, 93, 113, 133, 153, 173, 193];
  return (
    <svg width="62" height="192" viewBox="0 0 62 192">
      <path d={ys.map((y) => `M${y === 133 ? 37 : 49} ${y} H58`).join(" ")} stroke="#8d9196" strokeWidth="2" />
      <path d="M59.5 34 V192" stroke="#8d9196" strokeWidth="3" />
      <path d="M60 0 V34 M26 33 H60" stroke="#62666b" strokeWidth="2" />
      <text transform="translate(43 46) rotate(-90)" {...face} fill="#393b40">0</text>
    </svg>
  );
}
function TopRuler() {
  let d = "";
  for (let i = 1; i < 229; i++) {
    const x = 31 + (i * STEP) / 10;
    d += `M${x.toFixed(1)} ${i % 10 === 0 ? 1 : i % 5 === 0 ? 23 : 27} V32 `;
  }
  return (
    <svg width="1763" height="33" viewBox="0 0 1763 33">
      <path d={d} stroke="#d8d2e2" strokeWidth="2" />
      <path d="M33 32 H1760" stroke="#ddd6e6" strokeWidth="2" />
      <path d="M32 0 V33 M0 32 H33" stroke="#8d8b93" strokeWidth="2" />
      {Array.from({ length: 23 }, (_, i) => (
        <text key={i} x={(i ? 35 : 36) + i * STEP} y="20" {...face} textLength={i > 9 ? 29 : undefined} fill="#3d3b44">{i * 10}</text>
      ))}
    </svg>
  );
}
function LeftRuler() {
  let d = "";
  for (let i = 1; i < 163; i++) {
    const y = -2 + (i * STEP) / 10;
    d += `M${i % 10 === 0 ? 0 : i % 5 === 0 ? 22 : 26} ${y.toFixed(1)} H32 `;
  }
  return (
    <svg width="33" height="1229" viewBox="0 0 33 1229">
      <path d={d} stroke="#dcd5e6" strokeWidth="1.8" />
      <path d="M32 0 V1229" stroke="#ddd6e6" strokeWidth="2.4" />
      {Array.from({ length: 17 }, (_, i) => (
        <text key={i} transform={`translate(16 ${(i ? 1 : 3) + i * STEP}) rotate(-90)`} textAnchor="end" {...face} textLength={i > 9 ? 28 : undefined} fill="#3d3b44">{i * 10}</text>
      ))}
    </svg>
  );
}

/* ---------- chart ---------- */

const series = [
  { name: "PS1", to: 161.8, inner: "#76d6ff", outer: "#61adf1" },
  { name: "PS2", to: 255.8, inner: "#92fdb3", outer: "#79d696" },
  { name: "PS3", to: 302.6, inner: "#fdf597", outer: "#f6cb80" },
  { name: "PS4", to: 335.3, inner: "#ffb8aa", outer: "#f78f8c" },
  { name: "PS5", to: 356.8, inner: "#94fcf7", outer: "#7ad5d0" },
  { name: "PS6", to: 360, inner: "#a9a7cd", outer: "#9290b2" },
];
function Pie() {
  const r = 157;
  const at = (a: number) => `${(158 + r * Math.sin((a * Math.PI) / 180)).toFixed(2)} ${(158 - r * Math.cos((a * Math.PI) / 180)).toFixed(2)}`;
  return (
    <svg width="316" height="316" viewBox="0 0 316 316">
      <defs>
        {series.map((s) => (
          <radialGradient key={s.name} id={s.name} gradientUnits="userSpaceOnUse" cx="158" cy="158" r="157">
            <stop offset="0" stopColor={s.inner} />
            <stop offset="1" stopColor={s.outer} />
          </radialGradient>
        ))}
      </defs>
      {series.map((s, i) => (
        <path key={s.name} d={`M158 158 L${at(i ? series[i - 1].to : 0)} A${r} ${r} 0 0 1 ${at(s.to)} Z`} fill={`url(#${s.name})`} stroke="#fff" strokeWidth="2.4" strokeLinejoin="round" />
      ))}
    </svg>
  );
}

/* ---------- trees ---------- */

const faint = "#e9e6f2";
function Gutter({ arrow, down, last, first }: { arrow?: boolean; down?: boolean; last?: boolean; first?: boolean }) {
  return (
    <Ico w={42} h={36}>
      <path d={`M15 ${first ? 18 : 0} V${last ? 18 : 36} M15 18 H32`} stroke={faint} strokeWidth="2" />
      {arrow && (down ? <polygon points="8,14 25,14 16.5,22" fill="#a8a6a8" /> : <polygon points="12,12 21,18.5 12,25" fill="#a8a6a8" />)}
    </Ico>
  );
}
const files = [
  { name: "demo", dir: true },
  { name: "doc", dir: true },
  { name: "FineReport.Reuse", dir: true },
  { name: "GettingStarted.cpt", dir: false },
  { name: "kap_sales.cpt", dir: false },
];
const columns = ["TRANS_ID", "PART_DT", "LSTG_FORMAT_NAME", "LEAF_CATEG_ID", "LSTG_SITE_ID", "PRICE", "ITEM_COUNT", "SELLER_ID", "BUYER_ID", "OPS_USER_ID", "OPS_REGION"];

function Select({ w, value, icon }: { w: number; value: string; icon?: boolean }) {
  return (
    <SelectBox $w={w}>
      <SelectValue $pad={icon ? 4 : 10}>{icon && <Dataset />}<Text>{value}</Text></SelectValue>
      <SelectButton><Chevron /></SelectButton>
    </SelectBox>
  );
}

export default function App() {
  return (
    <Screen>
      <Global />
      <TitleBar>
        <Logo />
        <Text u={14} wide={26} bold h={32} color="#05050a">{"FineReport 9.0 stable 2018-3-14@默认[本地目录]    C:\\FineReport_9.0/WebReport/WEB-INF\\reportlets/kap_sales.cpt"}</Text>
        <WindowButtons>
          <WinButton><Ico w={22} h={22}><path d="M4 18 H17" stroke="#000" strokeWidth="4" /></Ico></WinButton>
          <WinButton><Ico w={22} h={22}><path d="M8 3 H20 V12 H16 M8 3 V8 M8 4.5 H20" stroke="#000" strokeWidth="2.2" /><path d="M2 9 H15 V19 H2 Z M2 11 H15" stroke="#000" strokeWidth="2.2" /></Ico></WinButton>
          <WinButton $gap={4}><Ico w={22} h={22}><path d="M3 3 L18 19 M18 3 L3 19" stroke="#000" strokeWidth="4.2" /></Ico></WinButton>
        </WindowButtons>
      </TitleBar>
      <MenuBar>
        <Gap $w={49} /><Text>文件</Text><Gap $w={59} /><Text>模板</Text><Gap $w={57} /><Text>服务器</Text><Gap $w={58} /><Text>帮助</Text><Gap $w={58} /><Text>社区</Text>
        <Gap $w={878} /><Text>日志</Text><Gap $w={18} /><Divider $h={24} $color="#222" /><Gap $w={16} />
        <Text>严重:10:36:28 Druid-ConnectionPool-Create-538121976 ERROR [com.fr.third.alibaba.druid.pool...</Text>
        <Gap $w={7} /><Search /><Gap $w={87} /><Text>未登录</Text>
      </MenuBar>
      <Body>
        <Side>
          <FileTools>
            <FolderOpen /><Gap $w={25} /><Refresh /><Gap $w={19} /><TemplateWin /><Gap $w={21} /><GearDoc /><Gap $w={20} /><Trash />
          </FileTools>
          <FileTree>
            {files.map((f, i) => (
              <TreeRow key={f.name}>
                <Gutter arrow={f.dir} first={i === 0} last={i === 4} />
                <TreeIcon $w={36}>{f.dir ? <Folder /> : <CptFile />}</TreeIcon>
                <TreeLabel $top={5} $sel={i === 4} $w={i === 4 ? 206 : undefined}><Text color={i === 4 ? "#fff" : c.ink}>{f.name}</Text></TreeLabel>
              </TreeRow>
            ))}
          </FileTree>
          <HSplit>
            <Tri dir="u" w={20} h={9} /><Ico w={12} h={8}><path d="M0 1 H12 M0 6 H12" stroke="#a3a3a6" strokeWidth="2" /></Ico><Tri dir="d" w={20} h={9} />
          </HSplit>
          <DataTools>
            <Ico w={28} h={28}><path d="M0 14 H28 M14 0 V28" stroke="#77747f" strokeWidth="4" /></Ico><Gap $w={4} /><Tri dir="d" w={12} h={7} />
            <Gap $w={18} /><Divider $h={30} /><Gap $w={16} /><Pencil /><Gap $w={24} /><Trash color="#8b8893" /><Gap $w={18} /><Divider $h={30} /><Gap $w={17} /><DocSearch /><Gap $w={24} /><ConnWin />
          </DataTools>
          <DataTabs><DataTab $on><Text>模版数据集</Text></DataTab><DataTab><Text>服务器数据集</Text></DataTab></DataTabs>
          <DataTree>
            <TreeRow><Gutter arrow down first /><TreeIcon $w={36}><Dataset /></TreeIcon><TreeLabel><Text>KAP_sales</Text></TreeLabel></TreeRow>
            {columns.map((name, i) => (
              <TreeRow key={name}>
                <Ico w={82} h={36}><path d={`M15 0 V36 M54 0 V${i === 10 ? 18 : 36} M56 18 H73`} stroke={faint} strokeWidth="2" /></Ico>
                <TreeIcon $w={36}><FieldIcon /></TreeIcon>
                <TreeLabel $sel={name === "PRICE"} $w={name === "PRICE" ? 68 : undefined}><Text color={name === "PRICE" ? "#fff" : c.ink}>{name}</Text></TreeLabel>
              </TreeRow>
            ))}
            <TreeRow><Gutter arrow /><TreeIcon $w={36}><Dataset /></TreeIcon><TreeLabel><Text>用户信息表</Text></TreeLabel></TreeRow>
            <TreeRow><Gutter arrow /><TreeIcon $w={36}><Server /></TreeIcon><TreeLabel><Text>staff</Text></TreeLabel></TreeRow>
            <TreeRow><Gutter arrow last /><TreeIcon $w={36}><Server /></TreeIcon><TreeLabel><Text>上报用户</Text></TreeLabel></TreeRow>
          </DataTree>
        </Side>
        <VSplit>
          <Tri dir="l" w={10} h={19} color="#8f8f93" />
          <Ico w={8} h={12}><path d="M1 0 V12 M6 0 V12" stroke="#a3a3a6" strokeWidth="2" /></Ico>
        </VSplit>

        <Center>
          <TopTools>
            <Preview>
              <PreviewIcon><PreviewDoc /><Ico w={43} h={8}><polygon points="16,0 28,0 22,7" fill="#a3a3a6" /></Ico></PreviewIcon>
              <Divider $h={84} />
            </Preview>
            <TopRight>
              <EditTools>
                <Save /><Gap $w={22} /><Undo color="#74aaf4" /><Gap $w={20} /><Undo color="#98989a" flip /><Gap $w={18} /><Divider $h={32} /><Gap $w={16} />
                <Cut /><Gap $w={22} /><Copy /><Gap $w={21} /><Paste /><Gap $w={24} /><RedX /><Gap $w={22} /><Divider $h={32} />
              </EditTools>
              <BookTabs>
                <NewBook><GridPlus /></NewBook>
                <BookTab $on $w={478}><BookIcon /><Text color="#3a3842">kap_sales.cpt *</Text><Push><Close /></Push></BookTab>
                <BookTab $w={480}><BookIcon /><Text color="#3a3842">WorkBook3 *</Text><Push><Close /></Push></BookTab>
                <TabMenuSlot><TabMenu /></TabMenuSlot>
              </BookTabs>
            </TopRight>
          </TopTools>
          <BlockTitle><Text u={14} wide={28} h={40} color="#8f8c97">聚合块编辑</Text></BlockTitle>
          <BlockArea>
            <BlockGutter><BlockSideRuler /></BlockGutter>
            <BlockMain><BlockRuler /><BlockActions><EyeOff /><EditBig /></BlockActions></BlockMain>
          </BlockArea>
          <Band />
          <Design>
            <Palette>{paletteIcons.map((p, i) => <PaletteItem key={i}><Ico w={44} h={44}>{p}</Ico></PaletteItem>)}</Palette>
            <Sheet>
              <TopRuler />
              <SheetBody>
                <LeftRuler />
                <Canvas>
                  <Handle $x={692} $y={147} $w={60} $h={40} />
                  <Handle $x={58} $y={600} $w={60} $h={61} />
                  <Handle $x={692} $y={580} $w={60} $h={81} />
                  <Chart>
                    <ChartTitle>新建图表标题</ChartTitle>
                    <ChartBody>
                      <Pie />
                      <Legend>
                        {series.map((s) => (
                          <LegendRow key={s.name}><Ico w={31} h={20}><path d="M0 9 Q6 0 15.5 0 Q25 0 31 9 L15.5 19.5 Z" fill={s.outer} /></Ico>{s.name}</LegendRow>
                        ))}
                      </Legend>
                    </ChartBody>
                  </Chart>
                  <Pin $x={0} $y={0}>
                    <Ico w={1310} h={1229}>
                      <path d="M59 0 V148" stroke="#8a8a8a" strokeWidth="2" strokeDasharray="2 2" />
                      <path d="M0 148 H58" stroke="#8a8a8a" strokeWidth="2" strokeDasharray="4 3" />
                      <path d="M1299 0 V1229" stroke="#6f6f72" strokeWidth="2" strokeDasharray="16 8 4 8" />
                    </Ico>
                  </Pin>
                  <Pin $x={56} $y={-3}><Text color="#858585">8毫米</Text></Pin>
                  <Pin $x={-1} $y={122}><Text color="#858585">19毫米</Text></Pin>
                </Canvas>
                <VScroll>
                  <ScrollButton $w={34} $h={34}><Chevron dir="u" color="#6d6d6d" s={19} sw={3.6} /></ScrollButton>
                  <Thumb $v $len={925} /><Track $v $len={202} />
                  <ScrollButton $w={34} $h={34}><Chevron color="#6d6d6d" s={19} sw={3.6} /></ScrollButton>
                </VScroll>
              </SheetBody>
            </Sheet>
          </Design>
          <HScroll>
            <ScrollButton $w={35} $shift={7}><Chevron dir="l" color="#6d6d6d" s={18} sw={3.6} /></ScrollButton>
            <Thumb $len={1383} /><Track $len={377} />
            <ScrollButton $w={33} $shift={4}><Chevron dir="r" color="#6d6d6d" s={18} sw={3.6} /></ScrollButton>
          </HScroll>
          <Status>
            <SheetTab $on><SheetIcon color="#a9a7ae" /><Text h={28} color="#5b5862">sheet1</Text></SheetTab>
            <SheetTab><SheetIcon color="#b5b2bd" /><Text h={28} color="#6b6874">sheet2</Text></SheetTab>
            <Gap $w={21} /><AddSheet />
            <Zoom>
              <Tri dir="l" w={8} h={15} /><Gap $w={41} /><Tri dir="r" w={8} h={15} />
              <Gap $w={36} /><Ico w={20} h={20}><path d="M0 10 H20" stroke="#3f3c4a" strokeWidth="3" /></Ico>
              <Gap $w={15} /><Slider><Knob /></Slider><Gap $w={29} />
              <Ico w={20} h={20}><path d="M0 10 H20 M10 0 V20" stroke="#3f3c4a" strokeWidth="2.4" /></Ico>
              <Gap $w={30} /><Text color="#3a3842">100%</Text>
            </Zoom>
          </Status>
        </Center>

        <Strip>
          <Tri dir="r" w={9} h={19} color="#8f8f93" />
          {stripIcons.map((s, i) => <StripItem key={i} $first={i === 0} $on={i === 3}><Ico w={36} h={32} vb="-2 0 36 32">{s}</Ico></StripItem>)}
        </Strip>

        <Props>
          <PropsTitle><Text>控件设置</Text><Ico w={24} h={24}><path d="M22 1 L6 17" stroke={c.blue} strokeWidth="3.4" /><path d="M1 10 V23 H13 Z" fill={c.blue} /></Ico></PropsTitle>
          <PropsTabs>
            {["类型", "数据", "样式", "特效"].map((t, i) => <PropsTab key={t} $on={i === 1}><Text>{t}</Text></PropsTab>)}
          </PropsTabs>
          <Field $top={20} $indent={17}><Text>数据来源</Text><Select w={268} value="数据集数据" /></Field>
          <Field $top={12} $indent={41}><Text>数据集</Text><FieldPair><Select w={192} value="KAP_sales" icon /><SearchBox><Glass /></SearchBox></FieldPair></Field>
          <Field $top={10} $indent={41}><Text>分类</Text><Select w={244} value="OPS_REGION" /></Field>
          <Rule />
          <Field $top={20} $indent={41}><Text>系列名使用</Text><Select w={244} value="使用字段值" /></Field>
          <Field $top={12} $indent={41} $end={36}><Text>系列名</Text><Select w={242} value="LSTG_FORMAT_..." /></Field>
          <Field $top={12} $indent={41} $end={36}><Text>值</Text><Select w={242} value="PRICE" /></Field>
          <Field $top={12} $indent={41} $end={36}><Text>汇总方式</Text><Select w={242} value="平均" /></Field>
          <Section><Text>数据筛选</Text><Tri dir="d" w={16} h={9} /></Section>
          <Segments><Segment $on><Text color="#fff">分类</Text></Segment><Segment><Text>系列</Text></Segment></Segments>
          <Check $top={10}><CheckMark /><Text>只使用前有限条记录</Text></Check>
          <Check $top={40}><CheckMark /><Text>分类为空时,不显示该分类</Text></Check>
          <Field $top={30} $indent={13} $end={24}><Raised><Text>形态</Text></Raised><Select w={310} value="取消形态设置" /></Field>
        </Props>
      </Body>
    </Screen>
  );
}
